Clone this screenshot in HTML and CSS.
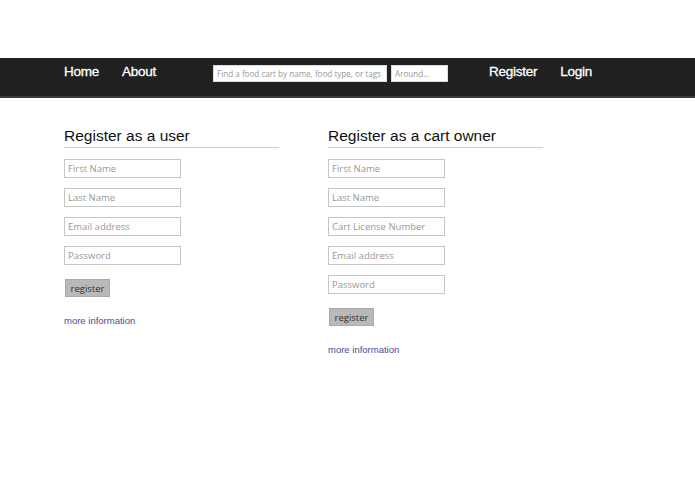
FILE: index.html
```html
<!DOCTYPE html>
<html lang="en">
<head>
    <meta charset="UTF-8">
    <meta name="viewport" content="width=device-width, initial-scale=1.0">
    <title>Food Carts - Register</title>
    <link rel="stylesheet" href="styles.css">
</head>
<body>
    <div class="navbar">
        <div class="nav-inner">
            <div class="nav-links">
                <a href="#">Home</a>
                <a href="#">About</a>
            </div>
            <form class="search">
                <input type="text" class="search-main" placeholder="Find a food cart by name, food type, or tags">
                <input type="text" class="search-near" placeholder="Around...">
            </form>
            <div class="nav-links nav-right">
                <a href="#">Register</a>
                <a href="#">Login</a>
            </div>
        </div>
    </div>

    <div class="content">
        <div class="column">
            <h2>Register as a user</h2>
            <form class="register-form">
                <input type="text" placeholder="First Name">
                <input type="text" placeholder="Last Name">
                <input type="text" placeholder="Email address">
                <input type="password" placeholder="Password">
                <button type="button">register</button>
            </form>
            <a class="more" href="#">more information</a>
        </div>

        <div class="column">
            <h2>Register as a cart owner</h2>
            <form class="register-form">
                <input type="text" placeholder="First Name">
                <input type="text" placeholder="Last Name">
                <input type="text" placeholder="Cart License Number">
                <input type="text" placeholder="Email address">
                <input type="password" placeholder="Password">
                <button type="button">register</button>
            </form>
            <a class="more" href="#">more information</a>
        </div>
    </div>
</body>
</html>
```

FILE: styles.css
```css
body {
    margin: 0;
    padding-top: 58px;
    font-family: "Liberation Sans", Arial, sans-serif;
    background-color: #fff;
}
.navbar {
    background-color: #212121;
    height: 38px;
    border-bottom: 2px solid #3a3a3a;
}
.nav-inner {
    display: flex;
    align-items: flex-start;
    padding-left: 64px;
}
.nav-links {
    display: flex;
    gap: 23px;
    padding-top: 6px;
}
.nav-links a {
    color: #fff;
    text-decoration: none;
    font-size: 13.5px;
    letter-spacing: -0.25px;
    line-height: 16px;
    -webkit-text-stroke: 0.3px #fff;
}
.nav-right {
    margin-left: 41px;
}
.search {
    display: flex;
    gap: 4px;
    margin-left: 57px;
    margin-top: 7px;
}
.search input {
    height: 17px;
    box-sizing: border-box;
    border: 1px solid #ddd;
    padding: 0 2px 0 3px;
    font-family: "Open Sans", "DejaVu Sans", sans-serif;
    font-size: 8.1px;
    background: #fff;
}
.search input::placeholder {
    color: #999;
}
.search-main {
    width: 174px;
}
.search-near {
    width: 57px;
}
.content {
    display: flex;
    padding-left: 64px;
    padding-top: 29px;
}
.column {
    width: 215px;
    margin-right: 49px;
}
h2 {
    margin: 0;
    font-size: 15.5px;
    font-weight: normal;
    color: #111;
    line-height: 18px;
    padding-bottom: 2px;
    border-bottom: 1px solid #ccc;
}
.register-form {
    display: flex;
    flex-direction: column;
    align-items: flex-start;
    gap: 10px;
    margin-top: 11px;
}
.register-form input {
    width: 117px;
    height: 19px;
    box-sizing: border-box;
    border: 1px solid #c6c6c6;
    padding: 0 3px;
    font-family: "Open Sans", "DejaVu Sans", sans-serif;
    font-size: 9.5px;
}
.register-form input::placeholder {
    color: #999;
}
.register-form button {
    margin-top: 4px;
    margin-left: 1px;
    width: 45px;
    height: 18px;
    background-color: #b9b9b9;
    border: 1px solid #aaa;
    padding: 0;
    font-family: "Open Sans", "DejaVu Sans", sans-serif;
    font-size: 9.5px;
    color: #333;
}
.more {
    display: block;
    margin-top: 18px;
    font-size: 9.5px;
    color: #4a4a9a;
    text-decoration: none;
}
```
